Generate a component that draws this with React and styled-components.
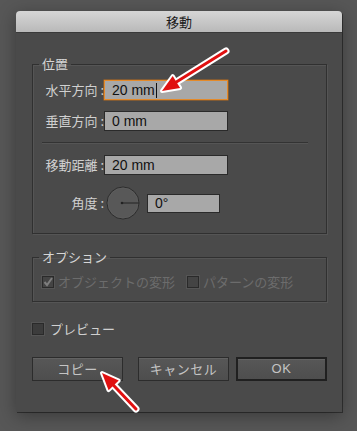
import styled, { createGlobalStyle } from "styled-components";

const Global = createGlobalStyle`
  html, body {
    margin: 0;
    padding: 0;
    background: #575757;
    width: 357px;
    height: 431px;
    overflow: hidden;
  }
  body {
    font-family: "Noto Sans CJK JP", "Noto Sans", sans-serif;
  }
`;

const Page = styled.div`
  position: relative;
  width: 357px;
  height: 431px;
  padding: 11px 15px 0 16px;
  box-sizing: border-box;
`;

const Dialog = styled.div`
  width: 326px;
  height: 401px;
  background: #4a4a4a;
  border-radius: 4px 4px 0 0;
  box-shadow: 0 4px 18px rgba(0, 0, 0, 0.35), 1px 1px 0 #333;
  display: flex;
  flex-direction: column;
`;

const TitleBar = styled.div`
  height: 21px;
  border-radius: 4px 4px 0 0;
  background: linear-gradient(#d6d6d6, #b9b9b9);
  border-bottom: 1px solid #3a3a3a;
  display: flex;
  align-items: center;
  justify-content: center;
  font-size: 13px;
  line-height: 21px;
  color: #1c1c1c;
`;

const Body = styled.div`
  padding: 23px 15px 0 16px;
  display: flex;
  flex-direction: column;
  color: #d2d2d2;
  font-size: 13px;
`;

const Group = styled.fieldset`
  margin: ${(p) => p.$top || 0}px 0 0 0;
  padding: ${(p) => p.$pt}px 9px ${(p) => p.$pb}px 9px;
  border: 1px solid #303030;
  box-shadow: inset 1px 1px 0 #555, 1px 1px 0 #555;
  display: flex;
  flex-direction: column;
  gap: ${(p) => p.$gap || 0}px;
  min-width: 0;
`;

const Legend = styled.legend`
  padding: 0 3px;
  margin-left: -3px;
  font-size: 13px;
  line-height: 16px;
  color: #d6d6d6;
`;

const Row = styled.div`
  display: flex;
  align-items: center;
  height: ${(p) => p.$h || 20}px;
  gap: ${(p) => p.$gap || 0}px;
  margin-top: ${(p) => p.$top || 0}px;
`;

const Label = styled.span`
  width: ${(p) => p.$w || 62}px;
  text-align: right;
  white-space: nowrap;
  font-size: 13px;
  line-height: 16px;
  color: #d0d0d0;
  flex-shrink: 0;
`;

const Field = styled.div`
  width: ${(p) => p.$w || 124}px;
  height: ${(p) => p.$h || 20}px;
  box-sizing: border-box;
  background: #a8a8a8;
  border: 1px solid ${(p) => (p.$focus ? "#e48a2a" : "#2a2a2a")};
  box-shadow: ${(p) => (p.$focus ? "0 0 0 0.5px #b86a1c" : "none")};
  padding-left: 7px;
  display: flex;
  align-items: center;
  font-family: "Liberation Sans", Arial, sans-serif;
  font-size: 14px;
  color: #111;
  margin-left: ${(p) => p.$ml || 0}px;
`;

const Caret = styled.span`
  display: inline-block;
  width: 1px;
  height: 15px;
  background: #111;
  margin-left: 1px;
`;

const Separator = styled.div`
  height: 1px;
  background: #333;
  border-bottom: 1px solid #555;
  margin: 0 9px 0 0;
`;

const Dial = styled.svg`
  flex-shrink: 0;
  margin-left: 2px;
`;

const CheckRow = styled.label`
  display: flex;
  align-items: center;
  height: 16px;
  color: ${(p) => (p.$disabled ? "#6c6c6c" : "#d0d0d0")};
  font-size: 13px;
  line-height: 16px;
  margin-left: ${(p) => p.$ml || 0}px;
`;

const Box = styled.span`
  width: 12px;
  height: 12px;
  box-sizing: border-box;
  border: 1px solid #2a2a2a;
  background: ${(p) => (p.$disabled ? "#444" : "#3c3c3c")};
  box-shadow: 0 0 0 1px #555;
  margin-right: ${(p) => p.$mr || 4}px;
  display: flex;
  align-items: center;
  justify-content: center;
  flex-shrink: 0;
`;

const PreviewText = styled.span`
  margin-left: 2px;
`;

const ButtonRow = styled.div`
  margin-top: 20px;
  display: flex;
  justify-content: space-between;
`;

const ButtonGroup = styled.div`
  display: flex;
  gap: 7px;
`;

const Button = styled.button`
  width: 91px;
  height: 24px;
  box-sizing: border-box;
  background: linear-gradient(#575757, #4e4e4e);
  border: ${(p) => (p.$primary ? "2px solid #202020" : "1px solid #2c2c2c")};
  box-shadow: inset 0 1px 0 #626262;
  color: #c4c4c4;
  font-family: ${(p) =>
    p.$primary
      ? '"Liberation Sans", Arial, sans-serif'
      : '"Noto Sans CJK JP", sans-serif'};
  font-size: 13px;
  line-height: 20px;
  padding: 0;
  letter-spacing: 0.5px;
`;

const Overlay = styled.svg`
  position: absolute;
  left: 0;
  top: 0;
  pointer-events: none;
`;

function Arrow({ tail, tip }) {
  const dx = tip[0] - tail[0];
  const dy = tip[1] - tail[1];
  const len = Math.hypot(dx, dy);
  const ux = dx / len;
  const uy = dy / len;
  const hl = 17;
  const hw = 7;
  const bx = tip[0] - ux * hl;
  const by = tip[1] - uy * hl;
  const p1 = [bx - uy * hw, by + ux * hw];
  const p2 = [bx + uy * hw, by - ux * hw];
  const head = `${tip[0]},${tip[1]} ${p1[0]},${p1[1]} ${p2[0]},${p2[1]}`;
  return (
    <g>
      <line x1={tail[0]} y1={tail[1]} x2={bx} y2={by} stroke="#fff" strokeWidth="7" strokeLinecap="round" />
      <polygon points={head} fill="#fff" stroke="#fff" strokeWidth="4" strokeLinejoin="round" />
      <line x1={tail[0]} y1={tail[1]} x2={bx + ux * 2} y2={by + uy * 2} stroke="#e01010" strokeWidth="3" strokeLinecap="round" />
      <polygon points={head} fill="#e01010" />
    </g>
  );
}

function Check({ checked, disabled, children, ml }) {
  return (
    <CheckRow $disabled={disabled} $ml={ml}>
      <Box $disabled={disabled}>
        {checked && (
          <svg width="10" height="10" viewBox="0 0 10 10">
            <path d="M1.5 5 L4 8 L9 1" fill="none" stroke="#7e7e7e" strokeWidth="2" />
          </svg>
        )}
      </Box>
      {children}
    </CheckRow>
  );
}

export default function App() {
  return (
    <Page>
      <Global />
      <Dialog>
        <TitleBar>移動</TitleBar>
        <Body>
          <Group $pt={8} $pb={13} $gap={11}>
            <Legend>位置</Legend>
            <Row>
              <Label>水平方向 :</Label>
              <Field $focus>
                20 mm
                <Caret />
              </Field>
            </Row>
            <Row>
              <Label>垂直方向 :</Label>
              <Field>0 mm</Field>
            </Row>
            <Separator />
            <Row>
              <Label>移動距離 :</Label>
              <Field>20 mm</Field>
            </Row>
            <Row $h={34}>
              <Label>角度 :</Label>
              <Dial width="34" height="34" viewBox="0 0 34 34">
                <circle cx="17" cy="17" r="16" fill="#585858" stroke="#2c2c2c" strokeWidth="1" />
                <circle cx="17" cy="17" r="15" fill="none" stroke="#606060" strokeWidth="0.6" />
                <line x1="16" y1="17" x2="33" y2="17" stroke="#222" strokeWidth="1" />
                <circle cx="16" cy="17" r="1.3" fill="#222" />
              </Dial>
              <Field $w={73} $h={19} $ml={7}>
                0°
              </Field>
            </Row>
          </Group>

          <Group $top={15} $pt={9} $pb={11}>
            <Legend>オプション</Legend>
            <Row $h={16}>
              <Check checked disabled>
                オブジェクトの変形
              </Check>
              <Check disabled ml={12}>
                パターンの変形
              </Check>
            </Row>
          </Group>

          <Row $h={16} $top={19}>
            <Check>
              <PreviewText>プレビュー</PreviewText>
            </Check>
          </Row>

          <ButtonRow>
            <Button>コピー</Button>
            <ButtonGroup>
              <Button>キャンセル</Button>
              <Button $primary>OK</Button>
            </ButtonGroup>
          </ButtonRow>
        </Body>
      </Dialog>
      <Overlay width="357" height="431" viewBox="0 0 357 431">
        <Arrow tail={[226, 51]} tip={[162, 91]} />
        <Arrow tail={[136, 409]} tip={[102, 373]} />
      </Overlay>
    </Page>
  );
}
